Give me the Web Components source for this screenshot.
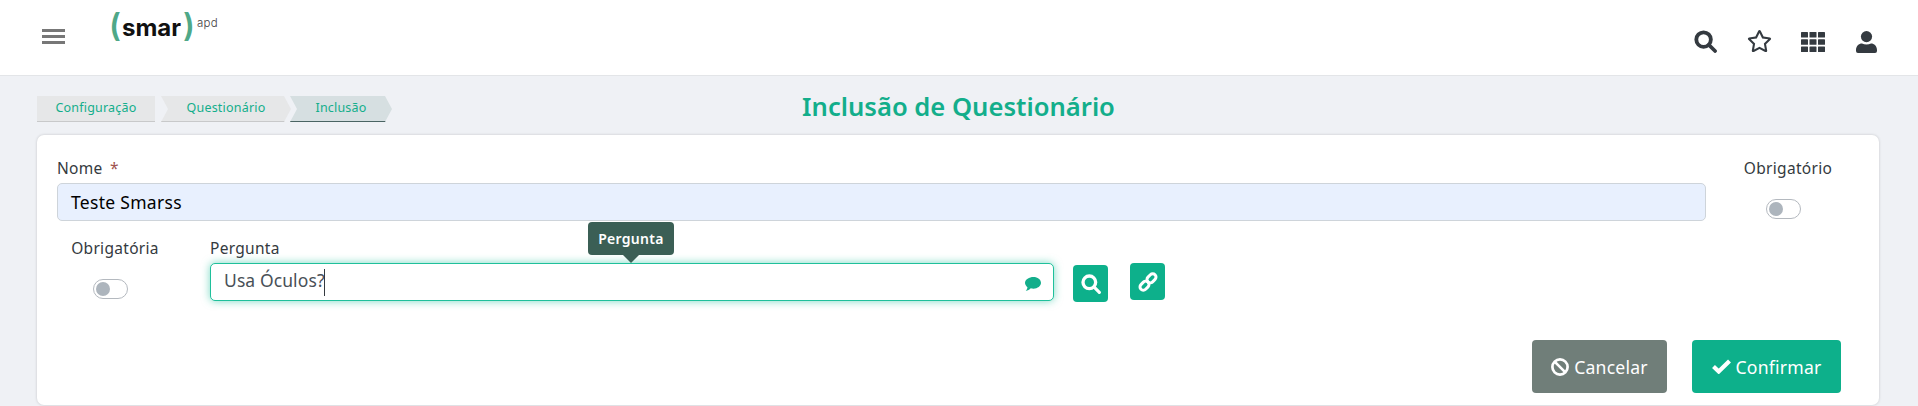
<!DOCTYPE html>
<html lang="pt-BR">
<head>
<meta charset="utf-8">
<title>Inclusão de Questionário</title>
<style>
    html, body { margin: 0; height: 406px; overflow: hidden; }
    body { background: #eff1f5; font-family: "Noto Sans", "Open Sans", sans-serif; color: #343a40; }
</style>
</head>
<body>
<app-header></app-header>
<app-page>
    <app-breadcrumb slot="crumbs"></app-breadcrumb>
    <span slot="title">Inclusão de Questionário</span>
    <app-form></app-form>
</app-page>

<script>
// ----------------------------------------------------
// Icons, shared by all the components
// ----------------------------------------------------
const icons = {
    search: `<svg viewBox="0 0 24 24"><circle cx="10" cy="10" r="7.6" fill="none" stroke="currentColor" stroke-width="4"/><path d="M15.500 15.500L22 22" fill="none" stroke="currentColor" stroke-width="3.800" stroke-linecap="round"/></svg>`,
    star: `<svg viewBox="0 0 576 512"><path fill="currentColor" d="M528.1 171.5L382 150.2 316.7 17.8c-11.7-23.6-45.6-23.9-57.4 0L194 150.2 47.9 171.5c-26.2 3.8-36.7 36.1-17.7 54.6l105.7 103-25 145.5c-4.5 26.3 23.2 46 46.4 33.7L288 439.6l130.7 68.7c23.2 12.2 50.9-7.4 46.4-33.7l-25-145.5 105.7-103c19-18.5 8.5-50.8-17.7-54.6zM388.6 312.3l23.7 138.4L288 385.4l-124.3 65.3 23.7-138.4-100.6-98 139-20.2 62.2-126 62.2 126 139 20.2-100.6 98z"/></svg>`,
    grid: `<svg viewBox="0 0 24 20"><g fill="currentColor"><rect x="0" y="0" width="7" height="5.6" rx=".6"/><rect x="8.5" y="0" width="7" height="5.6" rx=".6"/><rect x="17" y="0" width="7" height="5.6" rx=".6"/><rect x="0" y="7.2" width="7" height="5.6" rx=".6"/><rect x="8.5" y="7.2" width="7" height="5.6" rx=".6"/><rect x="17" y="7.2" width="7" height="5.6" rx=".6"/><rect x="0" y="14.4" width="7" height="5.6" rx=".6"/><rect x="8.5" y="14.4" width="7" height="5.6" rx=".6"/><rect x="17" y="14.4" width="7" height="5.6" rx=".6"/></g></svg>`,
    user: `<svg viewBox="0 0 21 22"><g fill="currentColor"><circle cx="10.5" cy="5.6" r="5.6"/><path d="M0 19.2C0 15 2.8 12.4 6 12.4c1.3.7 2.9 1.1 4.5 1.1s3.2-.4 4.5-1.1c3.2 0 6 2.6 6 6.8V20a2 2 0 0 1-2 2H2a2 2 0 0 1-2-2z"/></g></svg>`,
    link: `<svg viewBox="0 0 20 20"><g fill="none" stroke="currentColor" stroke-width="3"><rect x="8.500" y="3" width="10" height="6.600" rx="3.300" transform="rotate(-45 13.500 6.300)"/><rect x="1.500" y="10.400" width="10" height="6.600" rx="3.300" transform="rotate(-45 6.500 13.700)"/></g></svg>`,
    comment: `<svg viewBox="0 0 17 15"><path fill="currentColor" d="M9 0c4.4 0 8 2.7 8 6.2s-3.6 6.2-8 6.2c-1 0-2-.1-2.9-.4C4.800 13.500 3 14.500.8 14.800c.9-1.100 1.700-2.500 1.800-4C1 9.600 0 8 0 6.200 0 2.700 4.600 0 9 0z"/></svg>`,
    ban: `<svg viewBox="0 0 18 18"><g fill="none" stroke="currentColor" stroke-width="2.7"><circle cx="9" cy="9" r="7.600"/><path d="M3.600 3.600l10.800 10.800"/></g></svg>`,
    check: `<svg viewBox="0 0 19 15"><path fill="none" stroke="currentColor" stroke-width="4.200" d="M1.500 7.500l5.200 5L17.500 2"/></svg>`
};

// ----------------------------------------------------
// Top bar with the menu button, logo and right icons
// ----------------------------------------------------
class AppHeader extends HTMLElement {
    constructor() {
        super();
        this.attachShadow({ mode: 'open' });
    }
    connectedCallback() {
        this.shadowRoot.innerHTML = `
            <style>
                :host {
                    display: flex;
                    align-items: flex-start;
                    box-sizing: border-box;
                    height: 76px;
                    background: #fff;
                    border-bottom: 1px solid #e3e5e8;
                    color: #343a40;
                }
                .menu {
                    display: flex;
                    flex-direction: column;
                    gap: 3px;
                    width: 23px;
                    margin: 29px 0 0 42px;
                }
                .menu i { display: block; height: 3px; background: #777; }
                .logo {
                    display: flex;
                    align-items: flex-start;
                    margin: 12px 0 0 44px;
                    color: #111;
                    font: 700 24px/28px "Inter", sans-serif;
                }
                .paren { color: #4fa888; font-size: 32px; line-height: 30px; font-weight: 600; margin-top: -1px; }
                .word { margin: 2px 2px 0 1px; }
                .apd { color: #444; font-size: 11.5px; font-weight: 300; line-height: 14px; margin: 4px 0 0 2px; letter-spacing: .3px; }
                .tools { display: flex; align-items: center; margin: 30px 41px 0 auto; }
                .tools svg { display: block; }
                .search { width: 23px; height: 23px; }
                .star { width: 25px; height: 23px; margin-left: 30px; }
                .grid { width: 24px; height: 20px; margin-left: 29px; }
                .user { width: 21px; height: 22px; margin-left: 31px; }
            </style>
            <div class="menu"><i></i><i></i><i></i></div>
            <div class="logo"><span class="paren">(</span><span class="word">smar</span><span class="paren">)</span><span class="apd">apd</span></div>
            <div class="tools">
                <span class="search">${icons.search}</span>
                <span class="star">${icons.star}</span>
                <span class="grid">${icons.grid}</span>
                <span class="user">${icons.user}</span>
            </div>
        `;
    }
}

// ----------------------------------------------------
// Breadcrumb arrows
// ----------------------------------------------------
class AppBreadcrumb extends HTMLElement {
    constructor() {
        super();
        this.attachShadow({ mode: 'open' });
    }
    connectedCallback() {
        this.shadowRoot.innerHTML = `
            <style>
                :host { display: flex; gap: 0; font-size: 12.5px; letter-spacing: .2px; color: #13ae8b; }
                .crumb {
                    display: flex;
                    align-items: center;
                    justify-content: center;
                    box-sizing: border-box;
                    height: 26px;
                    padding-bottom: 3px;
                    background: #e6e7e8;
                    border-bottom: 1px solid #c8c9ca;
                }
                .first { width: 125px; clip-path: polygon(0 0, 118px 0, 118px 100%, 0 100%); padding-right: 7px; }
                .mid { width: 130px; margin-left: -1px; clip-path: polygon(0 0, 123px 0, 130px 50%, 123px 100%, 0 100%, 7px 50%); }
                .last {
                    width: 107px;
                    margin-left: -1px;
                    background: #d6dfe1;
                    border-bottom-color: #4a6463;
                    clip-path: polygon(0 0, 95px 0, 102px 50%, 95px 100%, 0 100%, 7px 50%);
                    padding-right: 5px;
                }
            </style>
            <div class="crumb first">Configuração</div>
            <div class="crumb mid">Questionário</div>
            <div class="crumb last">Inclusão</div>
        `;
    }
}

// ----------------------------------------------------
// Page area, title row above the content
// ----------------------------------------------------
class AppPage extends HTMLElement {
    constructor() {
        super();
        this.attachShadow({ mode: 'open' });
    }
    connectedCallback() {
        this.shadowRoot.innerHTML = `
            <style>
                :host { display: block; padding: 20px 39px 0 37px; }
                .top {
                    display: grid;
                    grid-template-columns: 1fr auto 1fr;
                    align-items: start;
                    height: 39px;
                }
                .title {
                    color: #13ae8b;
                    font-size: 25.6px;
                    font-weight: 600;
                    line-height: 32px;
                    margin: -5px 0 0 1px;
                }
            </style>
            <div class="top">
                <div><slot name="crumbs"></slot></div>
                <div class="title"><slot name="title"></slot></div>
                <div></div>
            </div>
            <slot></slot>
        `;
    }
}

// ----------------------------------------------------
// Small off switch
// ----------------------------------------------------
class AppSwitch extends HTMLElement {
    constructor() {
        super();
        this.attachShadow({ mode: 'open' });
    }
    connectedCallback() {
        this.shadowRoot.innerHTML = `
            <style>
                :host {
                    display: block;
                    box-sizing: border-box;
                    width: 35px;
                    height: 20px;
                    padding: 2px;
                    border: 1px solid #b4b9bf;
                    border-radius: 10px;
                    background: #fff;
                }
                i { display: block; width: 14px; height: 14px; border-radius: 50%; background: #adb5bd; }
            </style>
            <i></i>
        `;
    }
}

// ----------------------------------------------------
// Buttons: small square icon and large footer ones
// ----------------------------------------------------
class AppButton extends HTMLElement {
    constructor() {
        super();
        this.attachShadow({ mode: 'open' });
    }
    connectedCallback() {
        const icon = icons[this.getAttribute('icon')] || '';
        this.shadowRoot.innerHTML = `
            <style>
                :host {
                    display: flex;
                    align-items: center;
                    justify-content: center;
                    gap: 5px;
                    box-sizing: border-box;
                    background: var(--btn-bg, #0db08b);
                    border-radius: 4px;
                    color: #fff;
                    font-size: 17.6px;
                    letter-spacing: .2px;
                }
                span { display: block; width: var(--icon-w, 18px); height: var(--icon-h, 18px); }
                svg { display: block; width: 100%; height: 100%; }
            </style>
            <span>${icon}</span><slot></slot>
        `;
    }
}

// ----------------------------------------------------
// The form card
// ----------------------------------------------------
class AppForm extends HTMLElement {
    constructor() {
        super();
        this.attachShadow({ mode: 'open' });
    }
    connectedCallback() {
        this.shadowRoot.innerHTML = `
            <style>
                :host {
                    display: block;
                    box-sizing: border-box;
                    height: 270px;
                    padding: 22px 9px 0 20px;
                    background: #fff;
                    border-radius: 7px;
                    box-shadow: 0 0 3px rgba(0, 0, 0, .18);
                    font-size: 15.5px;
                    letter-spacing: .3px;
                    line-height: 22px;
                    color: #343a40;
                }
                .row1 { display: flex; }
                .grow { flex: 1; min-width: 0; }
                .req { color: #a0524f; margin-left: 3px; }
                .field {
                    box-sizing: border-box;
                    height: 38px;
                    margin-top: 4px;
                    padding: 0 13px;
                    display: flex;
                    align-items: center;
                    border-radius: 5px;
                    font-size: 17.5px;
                }
                .filled { background: #e8f0fe; border: 1px solid #ced4da; color: #000; }
                .switch-col {
                    display: flex;
                    flex-direction: column;
                    align-items: center;
                }
                .side { width: 164px; }
                .side app-switch { margin: 20px 10px 0 0; }
                .row2 { display: flex; align-items: flex-start; margin-top: 16px; }
                .obr { width: 116px; margin-right: 37px; }
                .obr app-switch { margin: 20px 10px 0 0; }
                .perg { position: relative; width: 844px; margin-top: 0; }
                .perg .lbl { display: block; height: 15px; line-height: 22px; padding-left: 0; }
                .focus {
                    justify-content: space-between;
                    border: 1px solid #1fc09b;
                    box-shadow: 0 0 8px rgba(31, 192, 155, .6);
                    color: #495057;
                    background: #fff;
                    margin-top: 11px;
                    letter-spacing: .1px;
                }
                .caret { display: inline-block; width: 1px; height: 27px; background: #343a40; vertical-align: middle; margin-left: -1px; }
                .bubble { display: block; width: 16px; height: 14px; color: #13ae8b; margin-right: -1px; margin-top: 3px; }
                .bubble svg { display: block; }
                .tip {
                    position: absolute;
                    left: 378px;
                    top: -15px;
                    box-sizing: border-box;
                    width: 86px;
                    height: 33px;
                    display: flex;
                    align-items: center;
                    justify-content: center;
                    background: #3b5f55;
                    border-radius: 4px;
                    color: #fff;
                    font-size: 14px;
                    font-weight: 600;
                }
                .tip::after {
                    content: "";
                    position: absolute;
                    left: 35px;
                    top: 33px;
                    border: 8px solid transparent;
                    border-top-color: #3b5f55;
                    border-bottom: 0;
                }
                .find { width: 35px; height: 37px; margin: 28px 0 0 19px; --icon-w: 20px; --icon-h: 20px; }
                .chain { width: 35px; height: 37px; margin: 26px 0 0 22px; --icon-w: 20px; --icon-h: 20px; }
                .footer { display: flex; justify-content: flex-end; gap: 25px; margin: 38px 29px 0 0; }
                .cancel { width: 135px; height: 53px; --btn-bg: #707e79; }
                .confirm { width: 149px; height: 53px; --icon-w: 19px; --icon-h: 15px; }
            </style>
            <div class="row1">
                <div class="grow">
                    <label>Nome <span class="req">*</span></label>
                    <div class="field filled">Teste Smarss</div>
                </div>
                <div class="switch-col side">
                    <span>Obrigatório</span>
                    <app-switch></app-switch>
                </div>
            </div>
            <div class="row2">
                <div class="switch-col obr">
                    <span>Obrigatória</span>
                    <app-switch></app-switch>
                </div>
                <div class="perg">
                    <span class="lbl">Pergunta</span>
                    <div class="field focus">
                        <span>Usa Óculos?<span class="caret"></span></span>
                        <span class="bubble">${icons.comment}</span>
                    </div>
                    <div class="tip">Pergunta</div>
                </div>
                <app-button class="find" icon="search"></app-button>
                <app-button class="chain" icon="link"></app-button>
            </div>
            <div class="footer">
                <app-button class="cancel" icon="ban">Cancelar</app-button>
                <app-button class="confirm" icon="check">Confirmar</app-button>
            </div>
        `;
    }
}

customElements.define('app-header', AppHeader);
customElements.define('app-breadcrumb', AppBreadcrumb);
customElements.define('app-page', AppPage);
customElements.define('app-switch', AppSwitch);
customElements.define('app-button', AppButton);
customElements.define('app-form', AppForm);
</script>
</body>
</html>
